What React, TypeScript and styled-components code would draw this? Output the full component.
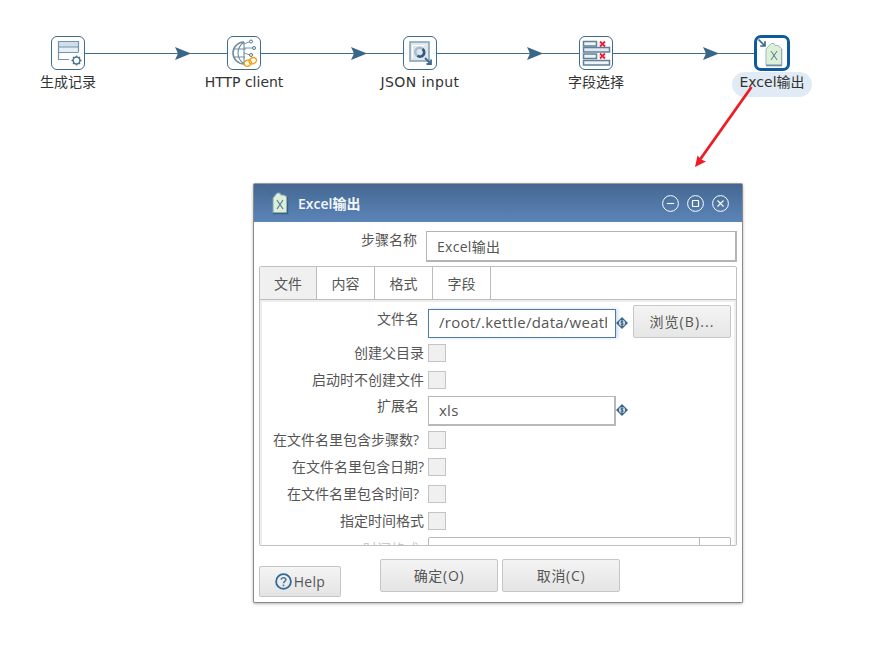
import React from "react";
import styled, { createGlobalStyle } from "styled-components";

const Global = createGlobalStyle`
  html, body { margin: 0; padding: 0; background: #fff; }
  body { font-family: "Open Sans", "Noto Sans CJK SC", sans-serif; color: #4d4d4d; }
`;

const Canvas = styled.div`
  position: relative;
  width: 889px;
  height: 665px;
  overflow: hidden;
  background: #fff;
`;
const Hops = styled.svg`
  position: absolute;
  inset: 0;
`;
const Step = styled.div<{ $x: number }>`
  position: absolute;
  left: ${(p) => p.$x - 60}px;
  top: 35px;
  width: 120px;
  display: flex;
  flex-direction: column;
  align-items: center;
`;
const StepIcon = styled.div<{ $selected?: boolean }>`
  box-sizing: border-box;
  width: ${(p) => (p.$selected ? 36 : 34)}px;
  height: ${(p) => (p.$selected ? 36 : 34)}px;
  margin-top: ${(p) => (p.$selected ? 0 : 1)}px;
  border: ${(p) => (p.$selected ? "3px solid #0e5a9c" : "1px solid #3f6b8c")};
  border-radius: ${(p) => (p.$selected ? 7 : 6)}px;
  background: #fff;
  display: flex;
  align-items: center;
  justify-content: center;
  svg { display: block; flex: none; }
`;
const StepLabel = styled.div<{ $selected?: boolean; $wide?: boolean }>`
  font-family: "DejaVu Sans", "Noto Sans CJK SC", sans-serif;
  font-size: 14px;
  line-height: 18px;
  letter-spacing: ${(p) => (p.$wide ? "0.4px" : "0")};
  margin-top: ${(p) => (p.$selected ? 1 : 3)}px;
  padding: ${(p) => (p.$selected ? "1px 7px 6px" : "0")};
  border-radius: 13px;
  color: #333;
  white-space: nowrap;
  background: ${(p) => (p.$selected ? "#e1ebf5" : "transparent")};
`;
const Dialog = styled.div`
  position: absolute;
  left: 253px;
  top: 183px;
  box-sizing: border-box;
  width: 490px;
  height: 420px;
  border: 1px solid #8a8a8a;
  border-top-color: #9a9a9a;
  border-radius: 2px;
  background: #fff;
  box-shadow: 0 1px 3px rgba(0, 0, 0, 0.3);
  display: flex;
  flex-direction: column;
`;
const TitleBar = styled.div`
  flex: none;
  height: 38px;
  background: linear-gradient(#446892, #5b84b8);
  display: flex;
  align-items: center;
  padding: 0 13px 0 12px;
`;
const TitleText = styled.div`
  flex: 1;
  margin-left: 4px;
  color: #f4f7fb;
  font-size: 14px;
  font-weight: 600;
`;
const WinButtons = styled.div`
  display: flex;
  gap: 8px;
`;
const Body = styled.div`
  flex: 1;
  display: flex;
  flex-direction: column;
  padding: 9px 5px 0;
  min-height: 0;
`;
const NameRow = styled.div`
  display: grid;
  grid-template-columns: 158px 1fr;
  column-gap: 9px;
  align-items: start;
`;
const NameLabel = styled.div`
  font-size: 14px;
  line-height: 18px;
  text-align: right;
  color: #555;
`;
const NameInput = styled.div`
  box-sizing: border-box;
  height: 31px;
  border: 1px solid #b4b4b4;
  border-width: 1px 2px 2px 1px;
  line-height: 29px;
  padding-left: 10px;
  font-size: 14px;
  letter-spacing: 0.3px;
  color: #555;
`;
const TabFolder = styled.div`
  box-sizing: border-box;
  height: 280px;
  margin-top: 4px;
  border: 1px solid #c0c0c0;
  border-radius: 2px;
  display: flex;
  flex-direction: column;
  overflow: hidden;
`;
const TabStrip = styled.div`
  flex: none;
  display: flex;
  height: 33px;
  box-sizing: border-box;
  border-bottom: 1px solid #bcbcbc;
`;
const Tab = styled.div<{ $active?: boolean; $w: number }>`
  box-sizing: border-box;
  width: ${(p) => p.$w}px;
  height: 32px;
  border-right: 1px solid #bcbcbc;
  background: ${(p) => (p.$active ? "#f0f0f0" : "#fff")};
  font-size: 14px;
  line-height: 33px;
  text-align: center;
  color: #555;
`;
const Panel = styled.div`
  flex: 1;
  min-height: 0;
  overflow: hidden;
  box-sizing: border-box;
  border: solid #eeeeee;
  border-width: 2px 2px 0 2px;
  padding-top: 3px;
`;
const Row = styled.div<{ $top: number }>`
  display: grid;
  grid-template-columns: 162px auto;
  column-gap: 4px;
  justify-content: start;
  align-items: center;
  margin-top: ${(p) => p.$top}px;
`;
const FieldRow = styled(Row)`
  align-items: start;
`;
const Label = styled.div<{ $pad?: number }>`
  font-size: 14px;
  line-height: 18px;
  text-align: right;
  white-space: nowrap;
  color: #555;
  margin-top: -1px;
  padding-right: ${(p) => p.$pad ?? 0}px;
`;
const FieldLabel = styled(Label)<{ $offset: number }>`
  margin-top: ${(p) => p.$offset}px;
`;
const Box = styled.div`
  box-sizing: border-box;
  width: 18px;
  height: 18px;
  background: #f0f0f0;
  border: 1px solid #c4c4c4;
`;
const FieldGroup = styled.div`
  display: flex;
  align-items: flex-start;
`;
const TextField = styled.div<{ $focus?: boolean }>`
  box-sizing: border-box;
  width: 188px;
  height: ${(p) => (p.$focus ? 29 : 30)}px;
  margin-top: ${(p) => (p.$focus ? 4 : 0)}px;
  border: 1px solid ${(p) => (p.$focus ? "#4d7aa8" : "#b8b8b8")};
  border-right-width: ${(p) => (p.$focus ? 1 : 2)}px;
  border-bottom-width: ${(p) => (p.$focus ? 1 : 2)}px;
  box-shadow: ${(p) => (p.$focus ? "2px 0 3px rgba(90, 140, 200, 0.3)" : "none")};
  padding: 0 10px;
  font-size: 15px;
  letter-spacing: 0.25px;
  line-height: ${(p) => (p.$focus ? 25 : 27)}px;
  color: #555;
`;
const FieldClip = styled.div`
  width: 168px;
  overflow: hidden;
  white-space: nowrap;
`;
const VarMark = styled.div<{ $top: number }>`
  margin-top: ${(p) => p.$top}px;
  svg { display: block; }
`;
const BrowseButton = styled.div`
  box-sizing: border-box;
  width: 98px;
  height: 33px;
  margin-left: 5px;
  border: 1px solid #c6c6c6;
  border-radius: 2px;
  background: linear-gradient(#f4f4f4, #e6e6e6);
  text-align: center;
  font-size: 14px;
  line-height: 31px;
  letter-spacing: 1.1px;
  color: #555;
`;
const ClippedLabel = styled(Label)`
  color: #c8c8c8;
  margin-top: 3px;
`;
const ComboField = styled.div`
  box-sizing: border-box;
  width: 303px;
  height: 30px;
  border: 1px solid #b8b8b8;
  border-radius: 2px;
  display: flex;
  justify-content: flex-end;
`;
const ComboArrow = styled.div`
  width: 30px;
  border-left: 1px solid #b8b8b8;
`;
const Footer = styled.div`
  flex: 1;
  display: flex;
  align-items: flex-start;
`;
const Button = styled.div<{ $w: number; $top: number; $left: number }>`
  box-sizing: border-box;
  width: ${(p) => p.$w}px;
  height: ${(p) => (p.$w < 100 ? 31 : 33)}px;
  margin-top: ${(p) => p.$top}px;
  margin-left: ${(p) => p.$left}px;
  border: 1px solid #c6c6c6;
  border-radius: 2px;
  background: linear-gradient(#f4f4f4, #e4e4e4);
  font-size: 14px;
  line-height: 31px;
  text-align: center;
  color: #555;
  letter-spacing: 0.7px;
`;
const HelpButton = styled(Button)`
  display: flex;
  align-items: center;
  justify-content: center;
  gap: 2px;
  font-size: 14px;
  letter-spacing: 0.3px;
  line-height: 29px;
  svg { display: block; }
`;

const FrameIcon = () => (
  <svg width="28" height="28" viewBox="0 0 28 28" fill="none">
    <rect x="5" y="3" width="19" height="5" fill="#cfe0ec" />
    <rect x="5" y="8" width="19" height="5" fill="#e6eff5" />
    <path d="M15 20.5H4.5V2.5H24.5V13M4.5 8H24.5M4.5 13.5H24.5" stroke="#7492a8" strokeWidth="1.2" />
    <circle cx="22.5" cy="21.5" r="3.4" stroke="#4a7592" strokeWidth="1.5" />
    <path d="M22.5 16.5V18M22.5 25V26.5M17.5 21.5H19M26 21.5H27.5M19 18L20 19M25 24L26 25M26 18L25 19M20 24L19 25" stroke="#4a7592" strokeWidth="1.3" />
  </svg>
);
const GlobeIcon = () => (
  <svg width="30" height="30" viewBox="0 0 30 30" fill="none">
    <path d="M15 4C9 4 4 9 4 15s5 11 11 11" stroke="#6d8ca3" strokeWidth="1.6" />
    <path d="M15 4C11 7 9 11 9 15s2 8 6 11M15 4v22M4.5 11H17M4.5 19H16" stroke="#6d8ca3" strokeWidth="1.1" />
    <path d="M15 6L21 3.5M15 10H24M15 15L21 17" stroke="#6d8ca3" strokeWidth="0.9" />
    <circle cx="22" cy="3.5" r="1.5" fill="#fff" stroke="#4a7592" />
    <circle cx="25" cy="10" r="1.5" fill="#fff" stroke="#4a7592" />
    <circle cx="22" cy="17" r="1.5" fill="#fff" stroke="#4a7592" />
    <g stroke="#f59c0c" strokeWidth="1.4" transform="rotate(-25 21 24)">
      <ellipse cx="18.5" cy="24" rx="3.8" ry="3" />
      <ellipse cx="24" cy="24" rx="3.8" ry="3" />
    </g>
  </svg>
);
const JsonIcon = () => (
  <svg width="30" height="30" viewBox="0 0 30 30" fill="none">
    <rect x="5" y="4" width="19" height="19" fill="#dfe6ec" stroke="#8aa5b8" strokeWidth="1.6" />
    <path d="M19.5 7.5H7.5V20" stroke="#fff" strokeWidth="1" />
    <circle cx="14.5" cy="14" r="4.2" stroke="#a9bccb" strokeWidth="2.6" />
    <path d="M17.5 11A4.2 4.2 0 0 1 12.5 17.8" stroke="#2f5a7a" strokeWidth="2.6" />
    <path d="M20 20L26 26M26 21.5V26H21.5" stroke="#3f6b8c" strokeWidth="1.8" />
  </svg>
);
const SelectIcon = () => (
  <svg width="32" height="32" viewBox="0 0 32 32" fill="none">
    <g stroke="#5f8199" strokeWidth="1.5" fill="#eef3f6">
      <rect x="3.5" y="4.5" width="13" height="4.5" />
      <rect x="3.5" y="10.5" width="26" height="4.5" fill="#dfe8ee" />
      <rect x="3.5" y="17" width="13" height="4.5" />
      <rect x="3.5" y="23.5" width="26" height="4.5" />
    </g>
    <path d="M20 4.5L25 9.5M25 4.5L20 9.5M20 16.5L25 21.5M25 16.5L20 21.5" stroke="#ee1c3c" strokeWidth="1.8" />
  </svg>
);
const ExcelDoc = () => (
  <svg width="30" height="30" viewBox="0 0 30 30" fill="none">
    <path d="M9 11L14 5.5H17L18 7.5H21L24.5 10.5V27H9Z" fill="#dcf0d8" stroke="#9fb7c6" strokeWidth="1" />
    <path d="M9 27.5H25" stroke="#6f8ea4" strokeWidth="1.6" />
    <path d="M24.8 11V27" stroke="#8fa8ba" strokeWidth="1" />
    <path d="M14 13L20 22M20 13L14 22" stroke="#4f7590" strokeWidth="1" />
    <path d="M1.5 1.5L8 8M8 3.2V8H3.2" stroke="#3f6b8c" strokeWidth="1.7" />
  </svg>
);
const TitleIcon = () => (
  <svg width="28" height="28" viewBox="0 0 28 28" fill="none">
    <path d="M7 9L11 4H14L15 6H18L21 8V24H7Z" fill="#dcf0d8" stroke="#7f9db5" strokeWidth="1" />
    <path d="M7 24.5H21.5V8" stroke="#3c5f84" strokeWidth="1.4" />
    <path d="M11 11L17 20M17 11L11 20" stroke="#4f7590" strokeWidth="1.1" />
    <path d="M1 1L6 6" stroke="#466a93" strokeWidth="1.2" />
  </svg>
);
const WinIcon = ({ kind }: { kind: "min" | "max" | "close" }) => (
  <svg width="17" height="17" viewBox="0 0 17 17" fill="none" stroke="#fff">
    <circle cx="8.5" cy="8.5" r="7.9" strokeWidth="1" />
    {kind === "min" && <path d="M4.8 8.5H12.2" strokeWidth="1.1" />}
    {kind === "max" && <rect x="5.5" y="5.5" width="6" height="6" rx="0.5" strokeWidth="1.2" />}
    {kind === "close" && <path d="M5.5 5.5L11.5 11.5M11.5 5.5L5.5 11.5" strokeWidth="1.1" />}
  </svg>
);
const DollarMark = () => (
  <svg width="12" height="12" viewBox="0 0 12 12">
    <path d="M6 0L12 6L6 12L0 6Z" fill="#39688c" />
    <circle cx="6" cy="6" r="3" fill="#dfe8ef" />
    <path d="M7.4 4.7C6.9 4 4.7 4 4.7 5.1C4.7 6.2 7.4 5.8 7.4 7C7.4 8 5.1 8 4.6 7.3M6 3.2V8.8" stroke="#2f5a7a" strokeWidth="1" fill="none" />
  </svg>
);
const HelpIcon = () => (
  <svg width="17" height="17" viewBox="0 0 17 17" fill="none">
    <circle cx="8.5" cy="8.5" r="7.4" stroke="#2f6a97" strokeWidth="1.8" />
    <path d="M6.2 6.6C6.4 4.2 10.8 4.2 10.8 6.7C10.8 8.4 8.5 8.2 8.5 10.2" stroke="#4a7da5" strokeWidth="1.6" />
    <circle cx="8.5" cy="12.4" r="1" fill="#4a7da5" />
  </svg>
);

const steps = [
  { x: 68, label: "生成记录", icon: <FrameIcon />, wide: false },
  { x: 244, label: "HTTP client", icon: <GlobeIcon />, wide: false },
  { x: 420, label: "JSON input", icon: <JsonIcon />, wide: true },
  { x: 596, label: "字段选择", icon: <SelectIcon />, wide: false },
];
const arrowTips = [191, 367, 543, 719];
const checks = [
  { label: "创建父目录", top: 6, pad: 0 },
  { label: "启动时不创建文件", top: 9, pad: 0 },
];
const moreChecks = [
  { label: "在文件名里包含步骤数?", top: 5, pad: 5 },
  { label: "在文件名里包含日期?", top: 9, pad: 0 },
  { label: "在文件名里包含时间?", top: 9, pad: 5 },
  { label: "指定时间格式", top: 9, pad: 0 },
];

export default function App() {
  return (
    <Canvas>
      <Global />
      <Hops width="889" height="665" viewBox="0 0 889 665">
        <path d="M85 53.5H755" stroke="#3f6b8c" strokeWidth="1" fill="none" />
        {arrowTips.map((t) => (
          <path key={t} d={`M${t - 16} 47L${t} 53.5L${t - 16} 60L${t - 13} 53.5Z`} fill="#3a6788" />
        ))}
      </Hops>
      {steps.map((s) => (
        <Step key={s.label} $x={s.x}>
          <StepIcon>{s.icon}</StepIcon>
          <StepLabel $wide={s.wide}>{s.label}</StepLabel>
        </Step>
      ))}
      <Step $x={772}>
        <StepIcon $selected>
          <ExcelDoc />
        </StepIcon>
        <StepLabel $selected>Excel输出</StepLabel>
      </Step>
      <Hops width="889" height="665" viewBox="0 0 889 665">
        <path d="M751.5 87L699 161" stroke="#ee1c25" strokeWidth="2.8" fill="none" />
        <path d="M695 167L697.5 155.5L701 159.5L706 161.5Z" fill="#ee1c25" />
      </Hops>
      <Dialog>
        <TitleBar>
          <TitleIcon />
          <TitleText>Excel输出</TitleText>
          <WinButtons>
            <WinIcon kind="min" />
            <WinIcon kind="max" />
            <WinIcon kind="close" />
          </WinButtons>
        </TitleBar>
        <Body>
          <NameRow>
            <NameLabel>步骤名称</NameLabel>
            <NameInput>Excel输出</NameInput>
          </NameRow>
          <TabFolder>
            <TabStrip>
              <Tab $active $w={57}>文件</Tab>
              <Tab $w={58}>内容</Tab>
              <Tab $w={58}>格式</Tab>
              <Tab $w={58}>字段</Tab>
            </TabStrip>
            <Panel>
              <FieldRow $top={0}>
                <FieldLabel $offset={5} $pad={5}>文件名</FieldLabel>
                <FieldGroup>
                  <TextField $focus>
                    <FieldClip>/root/.kettle/data/weather</FieldClip>
                  </TextField>
                  <VarMark $top={12}><DollarMark /></VarMark>
                  <BrowseButton>浏览(B)...</BrowseButton>
                </FieldGroup>
              </FieldRow>
              {checks.map((c) => (
                <Row key={c.label} $top={c.top}>
                  <Label $pad={c.pad}>{c.label}</Label>
                  <Box />
                </Row>
              ))}
              <FieldRow $top={7}>
                <FieldLabel $offset={1} $pad={5}>扩展名</FieldLabel>
                <FieldGroup>
                  <TextField>
                    <FieldClip>xls</FieldClip>
                  </TextField>
                  <VarMark $top={8}><DollarMark /></VarMark>
                </FieldGroup>
              </FieldRow>
              {moreChecks.map((c) => (
                <Row key={c.label} $top={c.top}>
                  <Label $pad={c.pad}>{c.label}</Label>
                  <Box />
                </Row>
              ))}
              <FieldRow $top={7}>
                <ClippedLabel $pad={5}>时间格式</ClippedLabel>
                <ComboField>
                  <ComboArrow />
                </ComboField>
              </FieldRow>
            </Panel>
          </TabFolder>
          <Footer>
            <HelpButton $w={82} $top={20} $left={0}>
              <HelpIcon />
              Help
            </HelpButton>
            <Button $w={118} $top={13} $left={39}>确定(O)</Button>
            <Button $w={118} $top={13} $left={4}>取消(C)</Button>
          </Footer>
        </Body>
      </Dialog>
    </Canvas>
  );
}
